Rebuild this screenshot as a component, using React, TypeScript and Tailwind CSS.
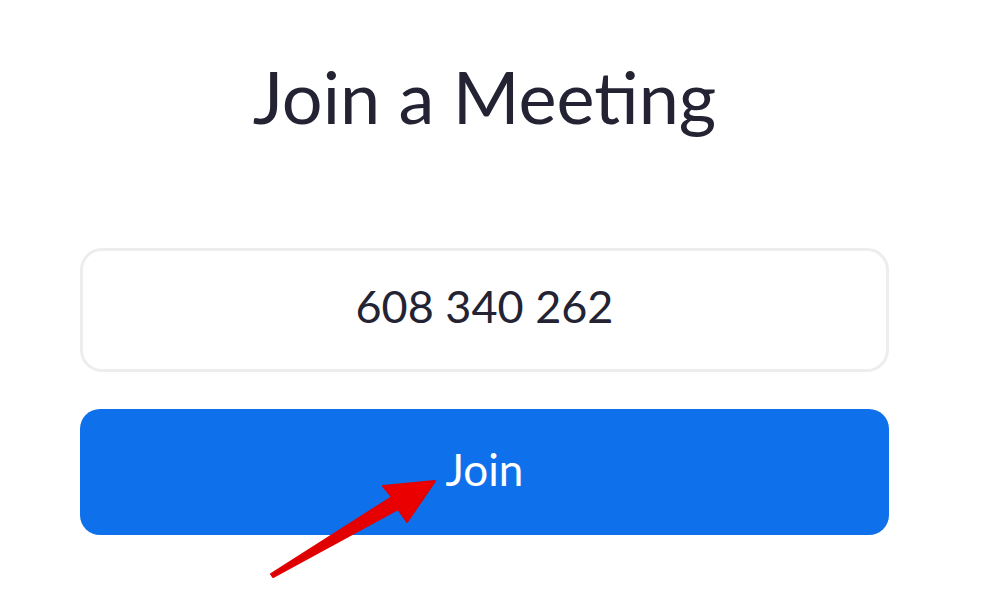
export default function App() {
  return (
    <div className="relative w-[983px] h-[616px] bg-white overflow-hidden font-['Lato',sans-serif] text-[#232333]">
      <div className="ml-[80px] w-[809px] flex flex-col">
        <h1 className="mt-[60px] h-[72px] text-center text-[72px] leading-[72px] font-normal">
          Join a Meeting
        </h1>
        <input
          readOnly
          defaultValue="608 340 262"
          className="mt-[116px] h-[124px] w-full rounded-[22px] border-[3px] border-[#ededed] bg-white pb-[9px] text-center text-[45px] text-[#232333] outline-none"
        />
        <button
          type="button"
          className="mt-[37px] h-[126px] w-full rounded-[20px] bg-[#0e71eb] pb-[7px] text-[44px] leading-none text-white"
        >
          Join
        </button>
      </div>

      {/* annotation arrow */}
      <svg
        className="absolute left-0 top-0 pointer-events-none"
        width="983"
        height="616"
        viewBox="0 0 983 616"
      >
        <defs>
          <linearGradient id="arr" x1="0" y1="1" x2="1" y2="0">
            <stop offset="0" stopColor="#d90000" />
            <stop offset="1" stopColor="#ee0000" />
          </linearGradient>
        </defs>
        <polygon
          points="271,574 392,497 383,486 435,481 407,522 398,509 273,577"
          fill="url(#arr)"
          stroke="#e20000"
          strokeWidth="2"
          strokeLinejoin="round"
        />
      </svg>
    </div>
  );
}
